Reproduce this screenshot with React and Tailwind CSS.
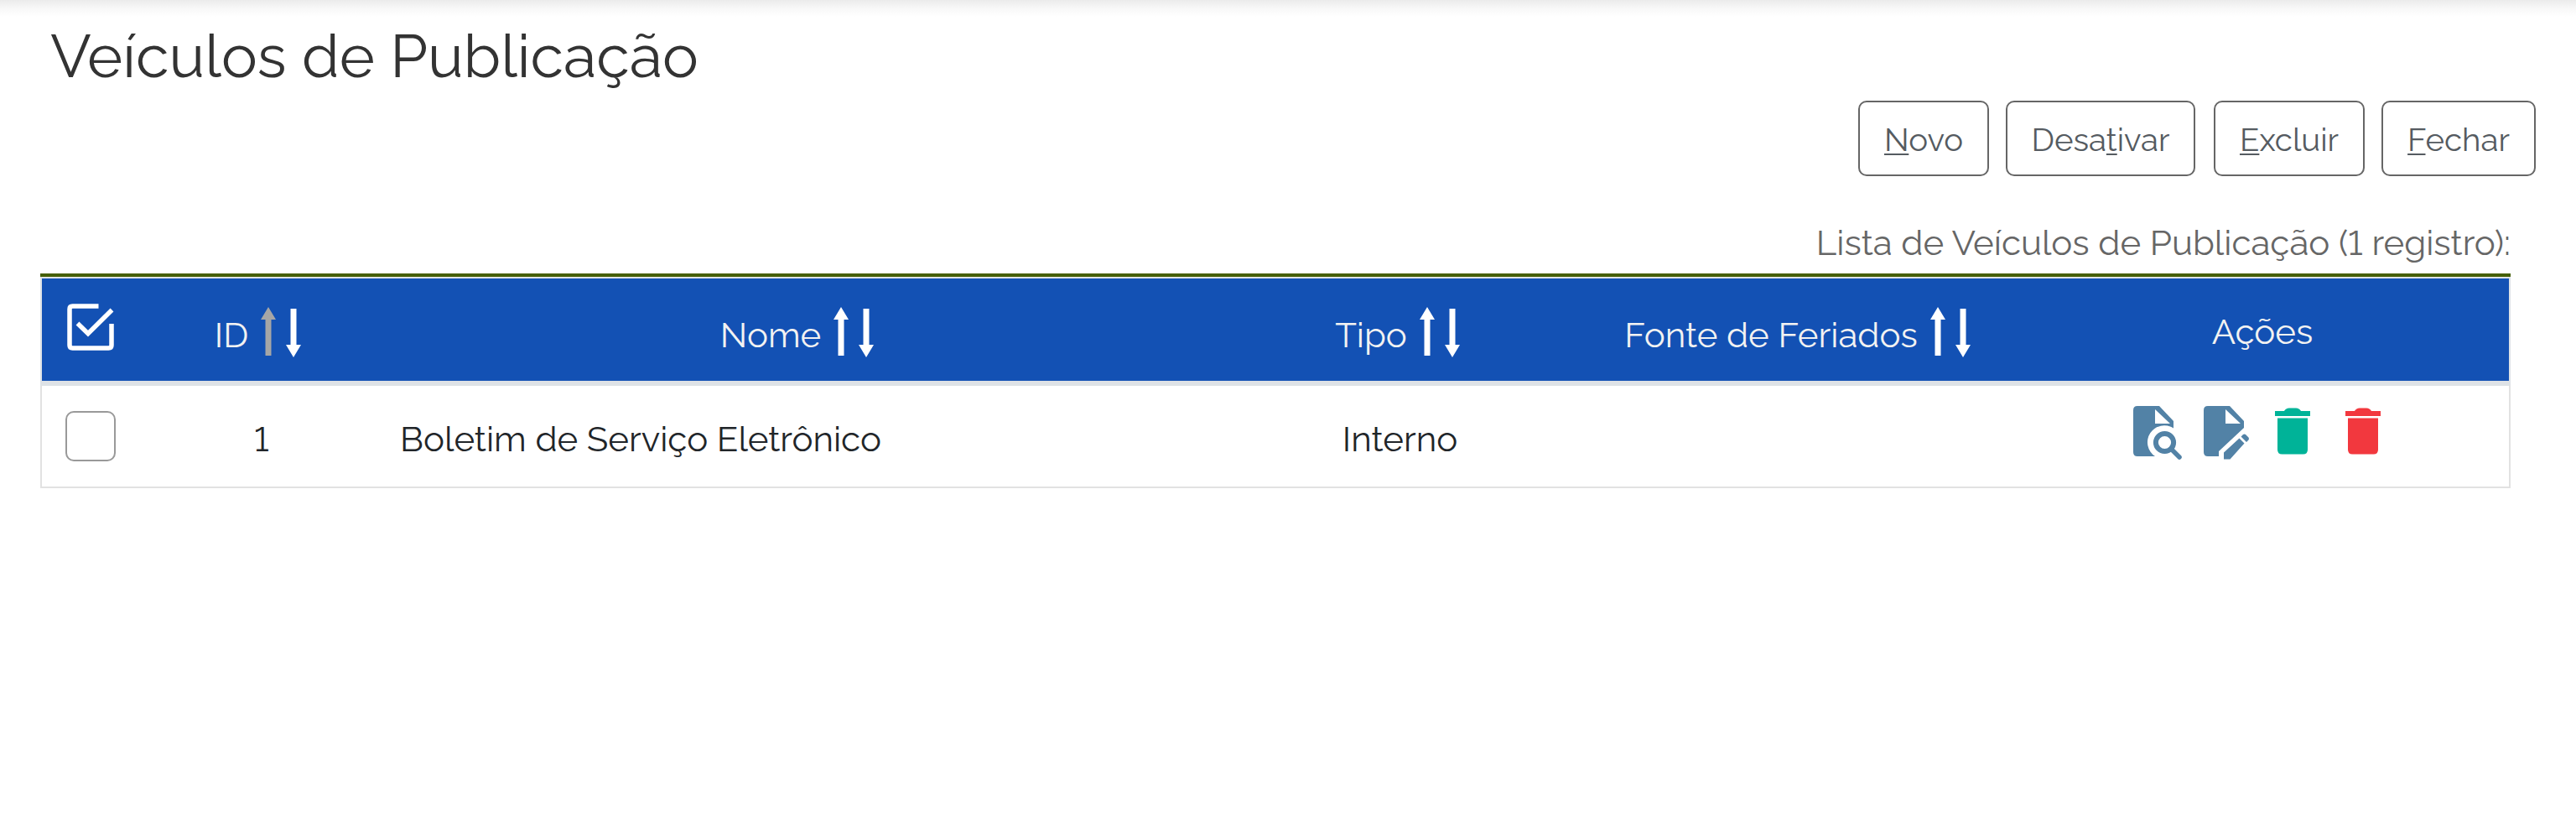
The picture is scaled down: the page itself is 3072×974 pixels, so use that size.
function SortArrows({ dim }) {
  return (
    <svg className="ml-[12px] h-16 w-[60px] shrink-0" viewBox="0 0 60 64">
      <path fill={dim ? "#a6a6a6" : "#ffffff"} d="M12 2l9 15h-5.500v43h-7V17H3z" />
      <path fill="#ffffff" d="M42 62l-9-15h5.500V4h7v43H51z" />
    </svg>
  );
}

function Th({ label, dim }) {
  return (
    <div className="flex items-center justify-center pt-[6px]">
      <span className="pt-2">{label}</span>
      <SortArrows dim={dim} />
    </div>
  );
}

function Button({ before = "", hot, after, className }) {
  return (
    <button
      type="button"
      className={
        "flex h-[90px] items-center justify-center rounded-[10px] border-2 border-[#666666] bg-white pt-[5px] text-[38.4px] leading-none text-[#555b61] " +
        className
      }
    >
      <span>
        {before}
        <span className="underline decoration-2 underline-offset-[3px]">{hot}</span>
        {after}
      </span>
    </button>
  );
}

function Trash({ color }) {
  return (
    <svg className="h-[56px] w-[44px]" viewBox="0 0 44 56" fill={color}>
      <path d="M1 4h11q2-3.500 6-3.500h8q4 0 6 3.500h11v6H1z" />
      <path d="M4 12.500h36V50q0 5.500-5.500 5.500h-25Q4 55.500 4 50z" />
    </svg>
  );
}

function ViewIcon() {
  return (
    <svg className="h-[64px] w-[60px]" viewBox="0 0 60 64">
      <path
        fill="#5282a6"
        fillRule="evenodd"
        d="M5 0h26l17 18v8.500A20 20 0 0 0 26 60H5q-5 0-5-5V5q0-5 5-5zM26 4v17h18z"
      />
      <circle cx="37.500" cy="43.500" r="10.600" fill="none" stroke="#5282a6" strokeWidth="6" />
      <path d="M46 52l9 9" stroke="#5282a6" strokeWidth="5.500" strokeLinecap="round" />
    </svg>
  );
}

function EditIcon() {
  return (
    <svg className="h-[64px] w-[60px]" viewBox="0 0 60 64">
      <path
        fill="#5282a6"
        fillRule="evenodd"
        d="M5 0h26l17 18v8L18 54v6H5q-5 0-5-5V5q0-5 5-5zM26 4v17h18z"
      />
      <path
        fill="#5282a6"
        d="M42.500 38.500l6 6-17 19H24v-8zM44.500 36.500l2.500-2.500q1.500-1 3 0l3.500 3.500q1 1.500 0 3l-2.500 2.500z"
      />
    </svg>
  );
}

export default function App() {
  return (
    <div className="h-[974px] w-[3072px] overflow-hidden bg-white font-['Raleway','Lato',sans-serif] font-normal lining-nums">
      <div className="h-5 bg-linear-to-b from-[#ebebeb] via-[#f8f8f8] to-white" />
      <h1 className="ml-[60px] h-[100px] text-[72px] leading-[94px] text-[#333333]">Veículos de Publicação</h1>
      <div className="flex justify-end gap-5 pr-12">
        <Button hot="N" after="ovo" className="w-[156px]" />
        <Button before="Desa" hot="t" after="ivar" className="mr-0.5 w-[226px]" />
        <Button hot="E" after="xcluir" className="w-[180px]" />
        <Button hot="F" after="echar" className="w-[184px]" />
      </div>
      <div className="ml-12 w-[2946px]">
        <p className="h-[116px] pt-[55px] text-right text-[42px] leading-[50px] text-[#666666]">
          Lista de Veículos de Publicação (1 registro):
        </p>
        <div className="border-t-4 border-[#455f05]">
          <div className="grid h-[124px] grid-cols-[118px_288px_998px_434px_520px_584px] border-t-2 border-r-2 border-l-2 border-[#dee2e6] bg-[#1351b4] text-[42px] leading-[50px] text-[#f2f2f2]">
            <div className="flex items-center pb-[4px] pl-[28px]">
              <svg className="h-[60px] w-[60px]" viewBox="0 0 60 60" fill="none" stroke="#ffffff" strokeWidth="5.500">
                <path d="M39.500 4H8.500Q5 4 5 7.500v43Q5 54 8.500 54h43q3.500 0 3.500-3.500V25" />
                <path d="M14.500 24.500L27 36.700 55.500 8.500" />
              </svg>
            </div>
            <Th label="ID" dim />
            <Th label="Nome" />
            <Th label="Tipo" />
            <Th label="Fonte de Feriados" />
            <div className="flex items-center justify-center pt-[5px] pr-1">Ações</div>
          </div>
          <div className="h-1.5 bg-[#dee2e6]" />
          <div className="grid h-[122px] grid-cols-[118px_288px_998px_434px_520px_584px] border-r-2 border-b-2 border-l-2 border-[#e2e2e2] text-[42px] leading-[50px] text-[#212529]">
            <div className="flex items-center pl-[28px]">
              <div className="h-[60px] w-[60px] rounded-[10px] border-2 border-[#999999] bg-white" />
            </div>
            <div className="flex items-center justify-center pt-[8px]">1</div>
            <div className="flex items-center pt-[8px] pl-[21px]">Boletim de Serviço Eletrônico</div>
            <div className="flex items-center justify-center pt-[8px] pr-[3px]">Interno</div>
            <div />
            <div className="flex items-start pt-6 pl-[136px]">
              <ViewIcon />
              <div className="ml-6">
                <EditIcon />
              </div>
              <div className="mt-0.5 ml-6">
                <Trash color="#00b398" />
              </div>
              <div className="mt-0.5 ml-10">
                <Trash color="#f2383e" />
              </div>
            </div>
          </div>
        </div>
      </div>
    </div>
  );
}
